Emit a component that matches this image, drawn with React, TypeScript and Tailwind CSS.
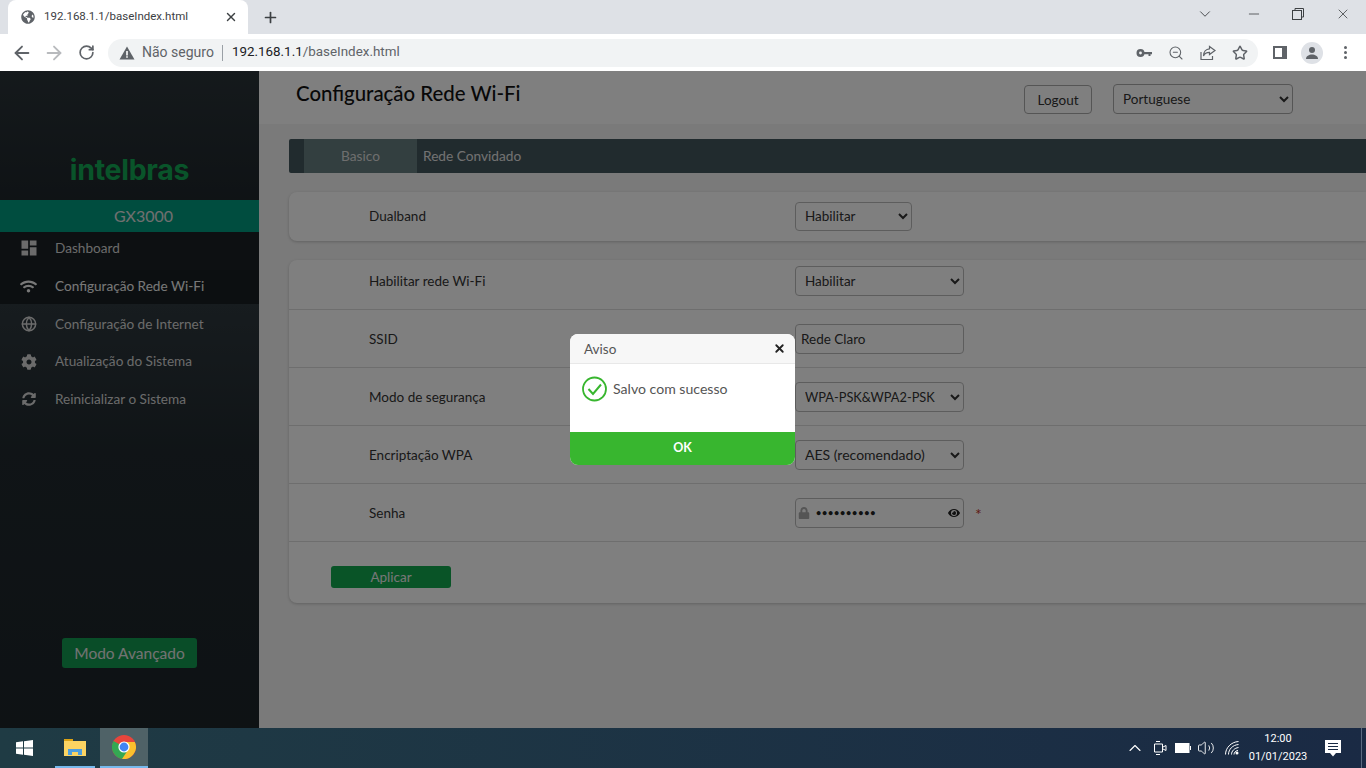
import React from 'react';
import { ArrowLeft, ArrowRight, RotateCw, Plus, X, ChevronDown, Minus, ZoomOut, Star, ChevronUp, Globe, Volume2 } from 'lucide-react';
import { FaCog, FaEye, FaGlobeAmericas, FaLock, FaSyncAlt, FaWifi } from 'react-icons/fa';
import { MdDashboard } from 'react-icons/md';

const font = { fontFamily: 'Lato, "Noto Sans", sans-serif' };

const menu = [
  { label: 'Dashboard', icon: 'dash', cls: 'h-[38px] pb-[6px] bg-[#1a2024]' },
  { label: 'Configuração Rede Wi-Fi', icon: 'wifi', cls: 'h-[34px] pb-[2px] bg-[#181e22] text-[#f0f0f0]' },
  { label: 'Configuração de Internet', icon: 'globe', cls: 'h-[40px]' },
  { label: 'Atualização do Sistema', icon: 'gear', cls: 'h-[37px] pb-[2px]' },
  { label: 'Reinicializar o Sistema', icon: 'sync', cls: 'h-[38px] pb-[2px]' },
];

function MenuIcon({ name }: { name: string }) {
  if (name === 'dash') return <MdDashboard size={20} />;
  if (name === 'wifi') return <FaWifi size={17} />;
  if (name === 'globe') return <Globe size={16} strokeWidth={2.2} />;
  if (name === 'gear') return <FaCog size={16} />;
  return <FaSyncAlt size={14} />;
}

function Row({ label, h, children, first }: { label: string; h: string; children: React.ReactNode; first?: boolean }) {
  return (
    <div className={`${h} flex items-center border-b border-[#dcdcdc] text-[13.5px] text-[#333]`}>
      <div className={`ml-[80px] w-[426px] ${first ? '' : 'pt-[2px]'}`}>{label}</div>
      {children}
    </div>
  );
}

const selectCls =
  'h-[30px] rounded-[4px] border border-[#bbb] bg-white pl-[5px] text-[13.5px] text-[#333] outline-none';

function ChromeLogo() {
  return (
    <svg width="24" height="24" viewBox="0 0 24 24">
      <circle cx="12" cy="12" r="12" fill="#e8453c" />
      <path d="M12 12 L1.6 6 A12 12 0 0 0 12 24 L17.2 14.5 Z" fill="#34a853" />
      <path d="M12 7 L22.8 7 A12 12 0 0 1 10 23.9 L16.3 14.5 Z" fill="#fbc02d" />
      <circle cx="12" cy="12" r="5.6" fill="#fff" />
      <circle cx="12" cy="12" r="4.4" fill="#4285f4" />
    </svg>
  );
}

export default function App() {
  return (
    <div className="flex h-[768px] w-[1366px] flex-col overflow-hidden" style={font}>
      {/* tabs */}
      <div className="flex h-[34px] items-end bg-[#dee1e6]" style={{ fontFamily: 'Roboto, sans-serif' }}>
        <div className="ml-[8px] flex h-[34px] w-[240px] items-center rounded-t-[8px] bg-white pl-[13px] pr-[10px] text-[11.5px] text-[#3c4043]">
          <FaGlobeAmericas size={14} className="text-[#5f6368]" />
          <span className="ml-[9px] flex-1">192.168.1.1/baseIndex.html</span>
          <X size={14} className="text-[#3c4043]" strokeWidth={2.4} />
        </div>
        <div className="ml-[14px] flex h-[34px] items-center text-[#3c4043]">
          <Plus size={17} strokeWidth={2.4} />
        </div>
        <div className="ml-auto flex h-[28px] items-center self-start text-[#3c4043]">
          <ChevronDown size={18} strokeWidth={1.2} className="mr-[32px]" />
          <Minus size={16} strokeWidth={1.2} className="mr-[30px]" />
          <svg width="12" height="12" viewBox="0 0 12 12" fill="none" stroke="currentColor" className="mr-[31px]">
            <rect x="0.5" y="2.5" width="9" height="9" />
            <path d="M3 2.5V0.5H11.5V9H9.5" />
          </svg>
          <X size={16} strokeWidth={1.2} className="mr-[15px]" />
        </div>
      </div>
      {/* toolbar */}
      <div className="flex h-[37px] items-center bg-white pl-[6px]" style={{ fontFamily: 'Roboto, sans-serif' }}>
        <span className="flex w-[32px] justify-center text-[#5f6368]">
          <ArrowLeft size={22} strokeWidth={2} />
        </span>
        <span className="flex w-[32px] justify-center text-[#b8babd]">
          <ArrowRight size={22} strokeWidth={2} />
        </span>
        <span className="flex w-[32px] justify-center text-[#5f6368]">
          <RotateCw size={17} strokeWidth={2.4} />
        </span>
        <div className="ml-[6px] flex h-[28px] w-[1150px] items-center rounded-full bg-[#f1f3f4] pl-[11px] text-[14px]">
          <svg width="16" height="14" viewBox="0 0 16 14">
            <path d="M8 0.500 15.500 13.500H0.500z" fill="#5f6368" />
            <path d="M7.200 5h1.600v4.500H7.200zM7.200 10.300h1.600v1.500H7.200z" fill="#fff" />
          </svg>
          <span className="ml-[7px] text-[#5f6368]">Não seguro</span>
          <span className="mx-[8px] h-[16px] w-px bg-[#9aa0a6]" />
          <span className="ml-[1px] text-[13.4px] text-[#202124]">192.168.1.1</span>
          <span className="text-[13.4px] text-[#5f6368]">/baseIndex.html</span>
          <div className="ml-auto mr-[10px] flex items-center gap-[16px] text-[#5f6368]">
            <svg width="16" height="16" viewBox="0 0 16 16" fill="currentColor">
              <path d="M4.500 4a4 4 0 1 1 0 8 4 4 0 0 1 0-8zm0 2.600a1.400 1.400 0 1 0 0 2.800 1.400 1.400 0 0 0 0-2.800zM8 7h8v2.200h-1.500V11h-2V9.200H8z" />
            </svg>
            <ZoomOut size={16} strokeWidth={1.6} />
            <svg width="16" height="16" viewBox="0 0 16 16" fill="none" stroke="currentColor" strokeWidth="1.2">
              <path d="M1 7v7.500h11.500V11" />
              <path d="M9.500 1.500 15 5.500 9.500 9.500V7.300C6.500 7.300 4.500 8.500 3.500 11 3.500 7 6 4 9.500 3.800z" />
            </svg>
            <Star size={16} strokeWidth={2.2} />
          </div>
        </div>
        <div className="ml-[15px] h-[13px] w-[14px] border-y-[2px] border-l-[2px] border-r-[5px] border-[#5f6368]" />
        <div className="ml-[14px] flex h-[22px] w-[22px] items-center justify-center rounded-full bg-[#dee1e6]">
          <svg width="14" height="14" viewBox="0 0 14 14" fill="#5f6368">
            <circle cx="7" cy="4" r="3" />
            <path d="M1 13c0-3 3-4.500 6-4.500s6 1.500 6 4.500z" />
          </svg>
        </div>
        <div className="ml-[21px] flex flex-col gap-[2px]">
          <span className="h-[3px] w-[3px] rounded-full bg-[#5f6368]" />
          <span className="h-[3px] w-[3px] rounded-full bg-[#5f6368]" />
          <span className="h-[3px] w-[3px] rounded-full bg-[#5f6368]" />
        </div>
      </div>
      {/* router page */}
      <div className="relative flex h-[657px] bg-[#f4f4f4]">
        <aside className="flex w-[259px] flex-col bg-[linear-gradient(180deg,#2a3338_0,#1e262b_129px,#2e383e_234px,#20292e_380px,#1c2429_100%)] text-[13.6px] text-[#d6d6d6]">
          <div className="flex h-[129px] items-end justify-center pb-[16px] text-[28.5px] font-bold leading-none tracking-[-0.3px] text-[#12a854]" style={{ fontFamily: 'Inter, sans-serif' }}>
            intelbras
          </div>
          <div className="flex h-[32px] items-center justify-center bg-[#009a7f] pl-[28px] text-[16px] text-[#e0e0e0]">GX3000</div>
          {menu.map((m) => (
            <div key={m.label} className={`flex items-center ${m.cls}`}>
              <span className="flex w-[55px] justify-center pl-[2px]">
                <MenuIcon name={m.icon} />
              </span>
              {m.label}
            </div>
          ))}
          <div className="ml-[62px] mt-[219px] flex h-[30px] w-[135px] items-center justify-center rounded-[3px] bg-[#129a50] pt-[2px] text-[15.5px] text-[#e6e6e6]">
            Modo Avançado
          </div>
        </aside>
        <main className="flex-1">
          <header className="flex h-[53px] items-start bg-white">
            <h1 className="ml-[37px] mt-[7px] text-[20.4px] font-medium text-[#111]">Configuração Rede Wi-Fi</h1>
            <div className="ml-auto mr-[73px] mt-[13px] flex items-start gap-[21px]">
              <button className="mt-[1px] h-[29px] w-[68px] rounded-[4px] border border-[#aaa] pt-[1px] text-[13.5px] text-[#333]">Logout</button>
              <select className="h-[30px] w-[180px] rounded-[4px] border border-[#aaa] bg-white pl-[5px] text-[13.5px] text-[#333]" defaultValue="pt">
                <option value="pt">Portuguese</option>
              </select>
            </div>
          </header>
          <div className="ml-[30px] mt-[15px] flex h-[34px] items-stretch rounded-l-[2px] bg-[#42565c] pl-[15px] text-[13.7px] text-[#e4e4e4]">
            <div className="flex w-[113px] items-center justify-center bg-[#667e80] text-[#ddd]">Basico</div>
            <div className="ml-[6px] flex items-center">Rede Convidado</div>
          </div>
          <section className="ml-[30px] mt-[19px] flex h-[49px] items-center rounded-l-[8px] bg-white pb-[1px] text-[13.5px] text-[#333] shadow-[0_1px_3px_rgba(0,0,0,0.2)]">
            <div className="ml-[80px] w-[426px]">Dualband</div>
            <select className={`${selectCls} !h-[29px] w-[117px]`} defaultValue="on">
              <option value="on">Habilitar</option>
            </select>
          </section>
          <section className="ml-[30px] mt-[19px] rounded-l-[8px] bg-white shadow-[0_1px_3px_rgba(0,0,0,0.2)]">
            <Row label="Habilitar rede Wi-Fi" h="h-[50px] pb-[7px]" first>
              <select className={`${selectCls} w-[169px]`} defaultValue="on">
                <option value="on">Habilitar</option>
              </select>
            </Row>
            <Row label="SSID" h="h-[58px]">
              <input className={`${selectCls} w-[169px] px-[6px]`} defaultValue="Rede Claro" />
            </Row>
            <Row label="Modo de segurança" h="h-[58px]">
              <select className={`${selectCls} !text-[12.8px] w-[169px]`} defaultValue="wpa">
                <option value="wpa">WPA-PSK&amp;WPA2-PSK</option>
              </select>
            </Row>
            <Row label="Encriptação WPA" h="h-[58px]">
              <select className={`${selectCls} !text-[14px] w-[169px]`} defaultValue="aes">
                <option value="aes">AES (recomendado)</option>
              </select>
            </Row>
            <Row label="Senha" h="h-[58px]">
              <div className={`${selectCls} !pl-[2px] flex w-[169px] items-center pr-[3px]`}>
                <FaLock size={12} className="text-[#aaa]" />
                <span className="ml-[6px] flex-1 text-[9px] font-bold leading-none tracking-[0.8px] text-[#222]">••••••••••</span>
                <FaEye size={12} className="text-[#222]" />
              </div>
              <span className="ml-[11px] mt-[2px] text-[16px] text-[#c0392b]">*</span>
            </Row>
            <div className="flex h-[61px] items-start pl-[42px] pt-[24px]">
              <button className="h-[22px] w-[120px] rounded-[3px] bg-[#12a84f] text-[13.5px] text-[#eee]">Aplicar</button>
            </div>
          </section>
        </main>
        {/* dim layer + modal */}
        <div className="absolute inset-0 bg-black/50" />
        <div className="absolute left-[570px] top-[263px] w-[225px] overflow-hidden rounded-[8px] bg-white text-[13.5px] text-[#555]">
          <div className="flex h-[30px] items-center justify-between border-b border-[#e8e8e8] bg-[#f7f7f7] pl-[14px] pr-[9px]">
            <span className="pt-[2px]">Aviso</span>
            <X size={13} strokeWidth={3.4} className="text-[#222]" />
          </div>
          <div className="flex h-[68px] items-start pl-[12px] pt-[12px]">
            <svg width="25" height="26" viewBox="0 0 25 26" fill="none" stroke="#38b62f">
              <circle cx="12.5" cy="13" r="11.5" strokeWidth="1.8" />
              <path d="M6.500 13l4.500 5 8-9.500" strokeWidth="2" />
            </svg>
            <span className="ml-[6px] mt-[2px] text-[14.1px]">Salvo com sucesso</span>
          </div>
          <div className="flex h-[33px] items-center justify-center bg-[#38b62f] text-[12.5px] font-bold text-white">OK</div>
        </div>
      </div>
      {/* taskbar */}
      <div className="flex h-[40px] items-stretch bg-gradient-to-r from-[#1f3b44] to-[#1a2a44] text-white" style={{ fontFamily: 'Roboto, sans-serif' }}>
        <div className="flex w-[48px] items-center justify-center">
          <svg width="17" height="16" viewBox="0 0 17 16" fill="#fff">
            <path d="M0 2.300 7 1.300V7.500H0zM8 1.200 17 0V7.500H8zM0 8.500H7V14.700L0 13.700zM8 8.500H17V16L8 14.800z" />
          </svg>
        </div>
        <div className="ml-[7px] flex w-[40px] items-center justify-center border-b-[2px] border-[#76b9ed]">
          <svg width="22" height="18" viewBox="0 0 22 18">
            <path d="M0 1h9v3H0z" fill="#dca214" />
            <path d="M0 3h22v15H0z" fill="#fcd462" />
            <path d="M4 17v-6h14v6h-4v-3H8v3z" fill="#4e9ede" />
          </svg>
        </div>
        <div className="ml-[5px] flex w-[48px] items-center justify-center border-b-[2px] border-[#76b9ed] bg-[#4f6267]">
          <ChromeLogo />
        </div>
        <div className="ml-auto flex items-center">
          <span className="flex w-[22px] justify-center">
            <ChevronUp size={20} strokeWidth={1.3} />
          </span>
          <span className="flex w-[28px] justify-center">
            <svg width="14" height="16" viewBox="0 0 14 16" fill="none" stroke="#fff">
              <path d="M3 1.500h4M3 14.500h4M1.500 4v8h8V4zM10 7l3-1.500v5L10 9" />
            </svg>
          </span>
          <span className="flex w-[18px] justify-center">
            <svg width="16" height="10" viewBox="0 0 16 10">
              <rect x="0.500" y="0.500" width="13.500" height="9" fill="#fff" stroke="#fff" />
              <rect x="15" y="3" width="1" height="4" fill="#fff" />
            </svg>
          </span>
          <span className="flex w-[28px] justify-center">
            <Volume2 size={18} strokeWidth={1.2} />
          </span>
          <span className="flex w-[24px] justify-center">
            <svg width="14" height="14" viewBox="0 0 14 14" fill="none" stroke="#fff" strokeWidth="1">
              <path d="M0.500 13.500C0.500 7 6 1 13.500 0.500M3.500 13.500C3.500 8.500 7.500 4 13.500 3.500M6.500 13.500C6.500 10 9.500 7 13.500 6.500M9 13.500C9 12 10.500 9.500 13 9.500" />
              <circle cx="12" cy="12" r="1.500" fill="#fff" stroke="none" />
            </svg>
          </span>
          <div className="flex w-[68px] flex-col items-center text-[11px] leading-[18px]">
            <span>12:00</span>
            <span>01/01/2023</span>
          </div>
          <span className="flex w-[42px] justify-center">
            <svg width="16" height="17" viewBox="0 0 16 17">
              <path d="M0 0h16v13h-5l-3 3.500L5 13H0z" fill="#fff" />
              <path d="M3 3.500h10M3 6.500h10M3 9.500h10" stroke="#1a2a44" />
            </svg>
          </span>
          <span className="ml-[7px] mr-[4px] h-[40px] w-px bg-[#5a6a80]" />
        </div>
      </div>
    </div>
  );
}
